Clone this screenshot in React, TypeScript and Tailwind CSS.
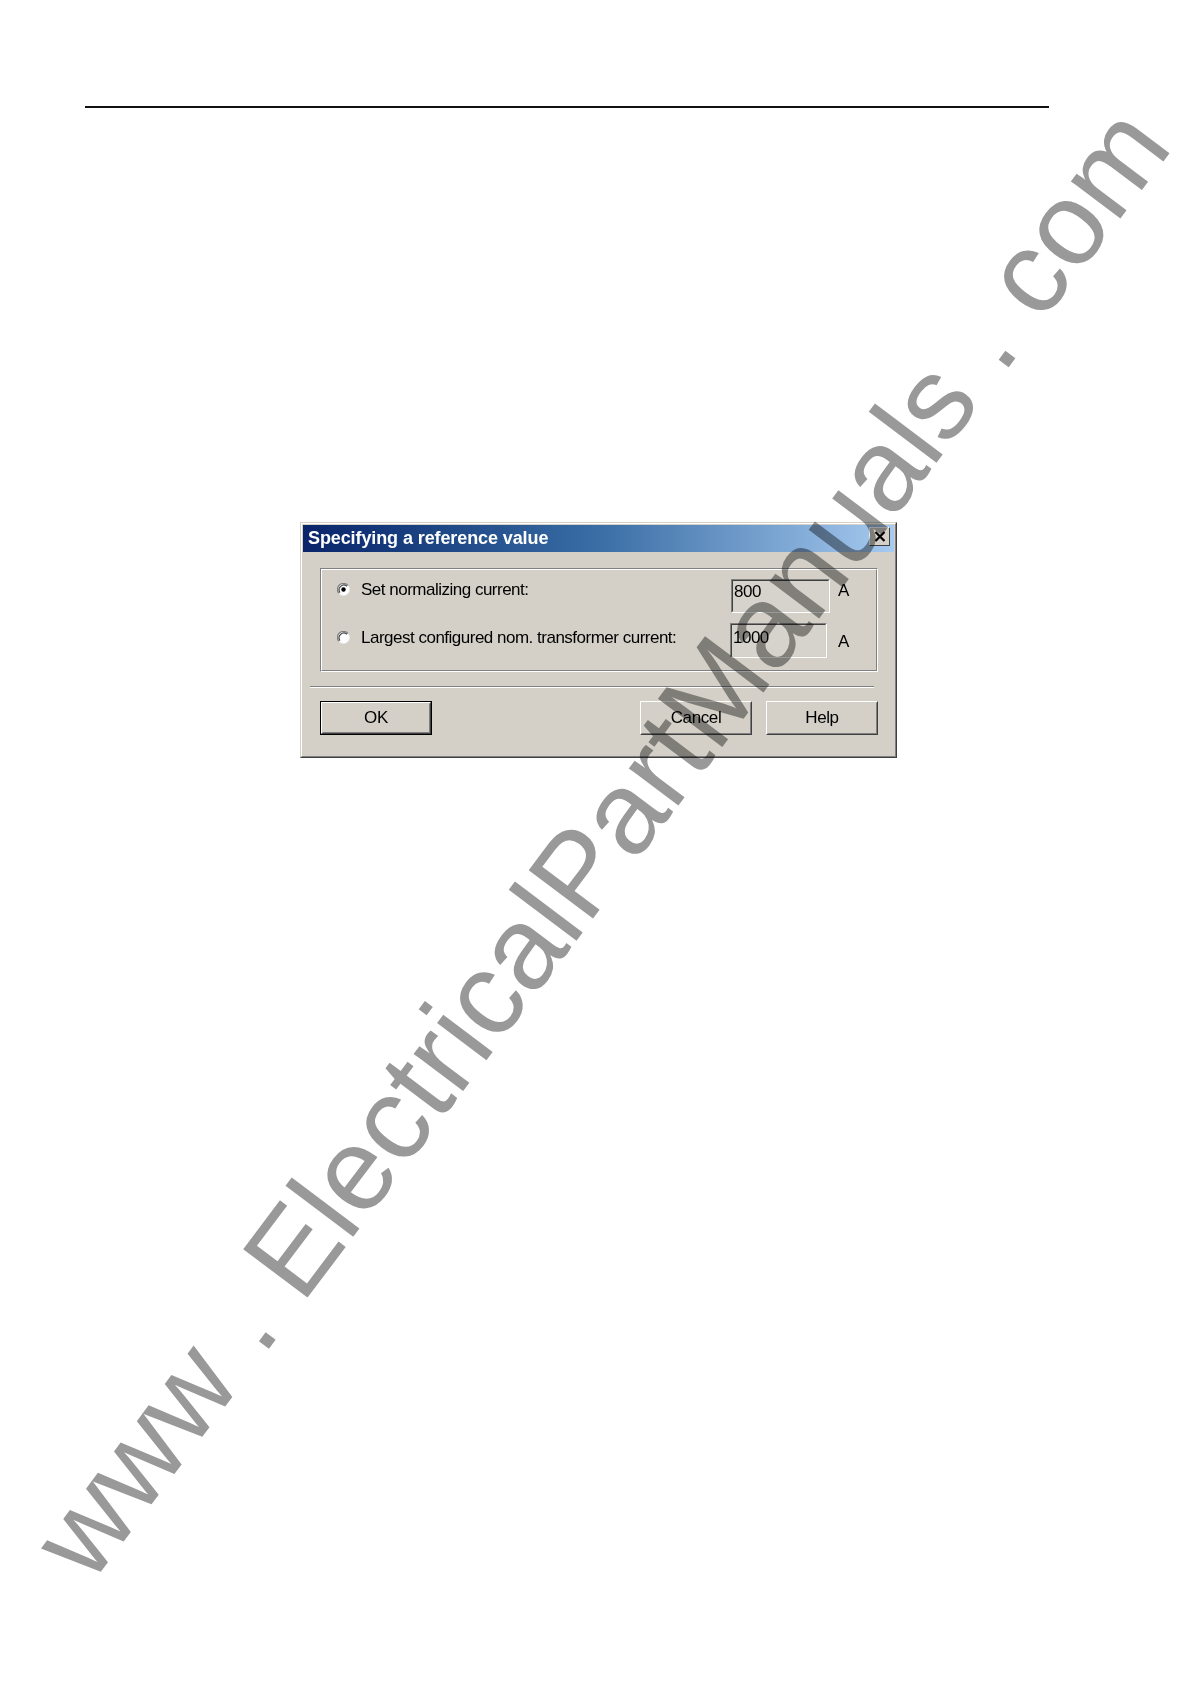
import React from "react";

const Radio = ({ checked }: { checked?: boolean }) => (
  <svg width="13" height="13" viewBox="0 0 13 13" className="shrink-0">
    <circle cx="6.5" cy="6.5" r="6" fill="#ffffff" />
    <path d="M11.2 2.6 A6 6 0 0 0 1.8 10.4" fill="none" stroke="#808080" strokeWidth="1.2" />
    <path d="M9.9 3.2 A4.8 4.8 0 0 0 2.9 9.6" fill="none" stroke="#404040" strokeWidth="1.2" />
    <path d="M1.8 10.4 A6 6 0 0 0 11.2 2.6" fill="none" stroke="#e8e8e8" strokeWidth="1" />
    {checked && <circle cx="6.5" cy="6.5" r="2.2" fill="#000000" />}
  </svg>
);

const Edit = ({ value, w, h, pt }: { value: string; w: string; h: string; pt: string }) => (
  <div className={`${w} ${h} shrink-0 border border-t-[#808080] border-l-[#808080] border-b-white border-r-white`}>
    <div className={`h-full border border-t-[#404040] border-l-[#404040] border-b-[#d4d0c8] border-r-[#d4d0c8] bg-[#d6d3cc] pl-[1px] ${pt} text-[17px] leading-[20px] tracking-[-0.5px] text-black`}>
      {value}
    </div>
  </div>
);

const Button = ({ label, isDefault }: { label: string; isDefault?: boolean }) => (
  <div className={`w-[112px] h-[34px] shrink-0 ${isDefault ? "border border-black" : ""}`}>
    <div className="h-full border border-t-white border-l-white border-b-[#404040] border-r-[#404040]">
      <div className="h-full border border-t-[#d4d0c8] border-l-[#d4d0c8] border-b-[#808080] border-r-[#808080] flex items-center justify-center text-[17px] leading-[20px] tracking-[-0.4px] text-black">
        {label}
      </div>
    </div>
  </div>
);

export default function App() {
  return (
    <div
      className="relative w-[1190px] h-[1684px] bg-white overflow-hidden"
      style={{ fontFamily: '"Liberation Sans", Arial, sans-serif' }}
    >
      <div className="pt-[106px] pl-[85px]">
        <div className="w-[964px] h-[2px] bg-[#111]" />
      </div>

      <div className="mt-[414px] ml-[300px] w-[597px] h-[236px] border border-t-[#d4d0c8] border-l-[#d4d0c8] border-b-[#404040] border-r-[#404040]">
        <div className="h-full border border-t-white border-l-white border-b-[#808080] border-r-[#808080] bg-[#d4d0c8] p-[1px] flex flex-col">
          <div className="h-[27px] bg-gradient-to-r from-[#0a246a] via-[#3a6ea5] to-[#a6caf0] flex items-start justify-between pl-[5px] pr-[4px]">
            <div className="pt-[3px] text-white font-bold text-[18px] leading-[21px] tracking-[-0.1px] whitespace-nowrap">
              Specifying a reference value
            </div>
            <div className="mt-[2px] w-[21px] h-[19px] border border-t-white border-l-white border-b-[#404040] border-r-[#404040] bg-[#d4d0c8] flex items-center justify-center">
              <svg width="12" height="11" viewBox="0 0 12 11">
                <path d="M1.5 1 L10.5 10 M10.5 1 L1.5 10" stroke="#000" strokeWidth="2.2" />
              </svg>
            </div>
          </div>

          <div className="mt-[16px] ml-[17px] mr-[16px] h-[104px] border border-t-[#808080] border-l-[#808080] border-b-white border-r-white">
            <div className="h-full border border-t-white border-l-white border-b-[#808080] border-r-[#808080] flex flex-col">
              <div className="mt-[9px] flex items-start">
                <div className="ml-[15px] mt-[4px]"><Radio checked /></div>
                <div className="ml-[11px] mt-[1px] w-[370px] text-[17px] leading-[20px] tracking-[-0.5px] text-black whitespace-nowrap">
                  Set normalizing current:
                </div>
                <Edit value="800" w="w-[99px]" h="h-[34px]" pt="pt-[1px]" />
                <div className="ml-[8px] mt-[2px] text-[17px] leading-[20px] text-black">A</div>
              </div>
              <div className="mt-[10px] flex items-start">
                <div className="ml-[15px] mt-[8px]"><Radio /></div>
                <div className="ml-[11px] mt-[5px] w-[369px] text-[17px] leading-[20px] tracking-[-0.5px] text-black whitespace-nowrap">
                  Largest configured nom. transformer current:
                </div>
                <Edit value="1000" w="w-[97px]" h="h-[35px]" pt="pt-[3px]" />
                <div className="ml-[11px] mt-[9px] text-[17px] leading-[20px] text-black">A</div>
              </div>
            </div>
          </div>

          <div className="mt-[14px] ml-[7px] mr-[20px] h-[2px] border-t border-t-[#808080] border-b border-b-white" />

          <div className="mt-[13px] ml-[17px] flex">
            <Button label="OK" isDefault />
            <div className="ml-[208px]"><Button label="Cancel" /></div>
            <div className="ml-[14px]"><Button label="Help" /></div>
          </div>
        </div>
      </div>

      <div
        className="absolute left-[600px] top-[842px] -translate-x-1/2 -translate-y-1/2 -rotate-[53deg] whitespace-nowrap text-[117px] leading-none text-[#999999] mix-blend-multiply pointer-events-none"
      >
        www . ElectricalPartManuals . com
      </div>
    </div>
  );
}
